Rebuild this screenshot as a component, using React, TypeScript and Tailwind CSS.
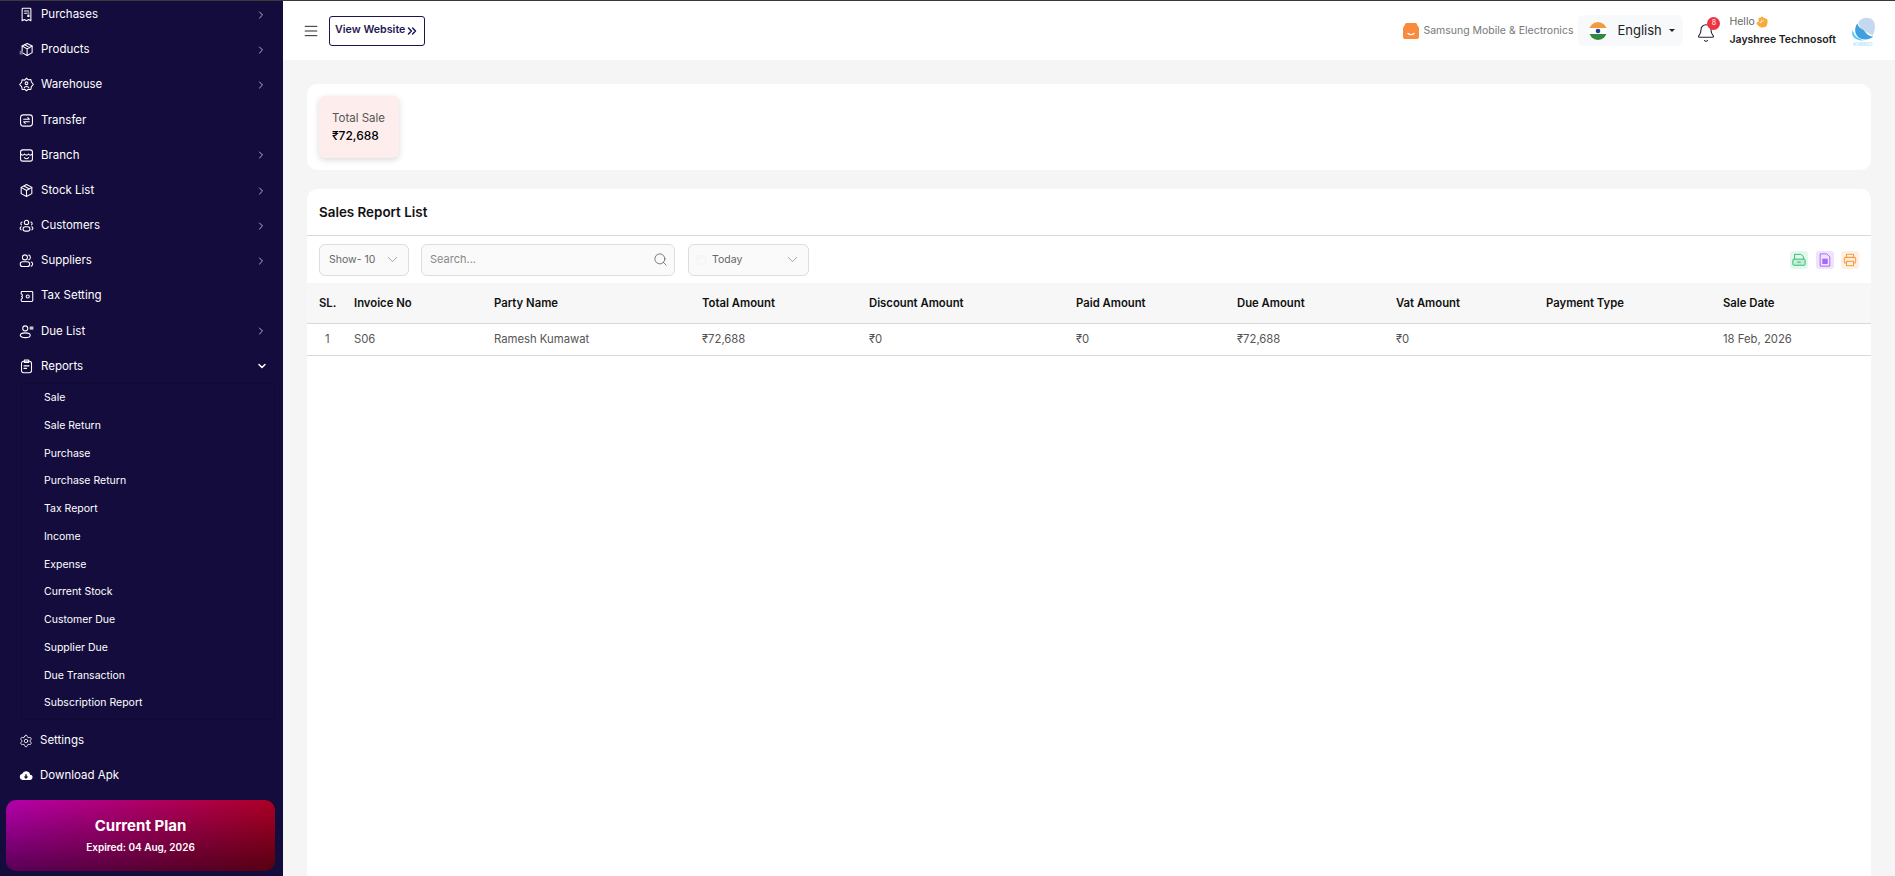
import { ChevronDown, ChevronRight, ChevronsRight, Bell, Menu, Search, Settings, Calendar, Hand } from "lucide-react";
import type { ReactNode } from "react";

const Icon = ({ children }: { children: ReactNode }) => (
  <svg viewBox="0 0 24 24" fill="none" stroke="currentColor" strokeWidth="1.7" strokeLinecap="round" strokeLinejoin="round" className="w-[15px] h-[15px] shrink-0">
    {children}
  </svg>
);

const cube = (
  <>
    <path d="M13 2.5 21 6.5V17l-8 4.5L5 17V6.5z" />
    <path d="M5 6.5 13 11l8-4.5M13 11v10.500M9 4.500l8 4.500" />
  </>
);

const menu: { label: string; icon: ReactNode; arrow?: boolean }[] = [
  {
    label: "Purchases",
    arrow: true,
    icon: (
      <Icon>
        <path d="M5 3.500A1.500 1.500 0 0 1 6.500 2h11A1.500 1.500 0 0 1 19 3.500V22l-3.500-2-3.500 2-3.500-2L5 22z" />
        <path d="M8.500 6.500h7M9 10h3M14 9.500h2M14 13h2v2h-2" />
      </Icon>
    ),
  },
  {
    label: "Products",
    arrow: true,
    icon: (
      <Icon>
        {cube}
        <rect x="1" y="14" width="5" height="6" fill="#77748f" stroke="none" />
      </Icon>
    ),
  },
  {
    label: "Warehouse",
    arrow: true,
    icon: (
      <Icon>
        <path d="M12 2l3 2.500 4-.500.800 4L23 12l-3.200 3.500-.800 4.500-4-.500-3 2.500-3-2.500-4 .500-.800-4.500L1 12l3.200-3.500.800-4 4 .500z" />
        <circle cx="12" cy="10" r="2.200" />
        <path d="M8.500 17c.500-2.500 6.500-2.500 7 0" />
      </Icon>
    ),
  },
  {
    label: "Transfer",
    icon: (
      <Icon>
        <rect x="2.500" y="3" width="19" height="18" rx="4.500" />
        <path d="M7.500 10h9l-2.500-2.500M16.500 14h-9l2.500 2.500" />
      </Icon>
    ),
  },
  {
    label: "Branch",
    arrow: true,
    icon: (
      <Icon>
        <rect x="2.500" y="3" width="19" height="18" rx="3.500" />
        <path d="M2.500 9.500c2 2.500 4.500 2.500 6.300 0 1.800 2.500 4.600 2.500 6.400 0 1.800 2.500 4.300 2.500 6.300 0M8.500 15.500c2 2 5 2 7 0" />
      </Icon>
    ),
  },
  {
    label: "Stock List",
    arrow: true,
    icon: (
      <Icon>
        <path d="M12 2.500 20.500 7v10L12 21.500 3.500 17V7z" />
        <path d="M3.500 7 12 12l8.500-5M12 12v9.500M8 4.700l8.500 4.800" />
      </Icon>
    ),
  },
  {
    label: "Customers",
    arrow: true,
    icon: (
      <Icon>
        <circle cx="12" cy="7" r="3.500" />
        <path d="M5 6.500a2.500 2.500 0 0 0-1 4.500M19 6.500a2.500 2.500 0 0 1 1 4.500" />
        <rect x="6.500" y="14" width="11" height="7" rx="3.500" />
        <path d="M3.500 14C1.500 15 1 18 3.500 19M20.500 14c2 1 2.500 4 0 5" />
      </Icon>
    ),
  },
  {
    label: "Suppliers",
    arrow: true,
    icon: (
      <Icon>
        <circle cx="9.500" cy="7" r="4" />
        <path d="M15.500 3.200a4 4 0 0 1 0 7.600" />
        <rect x="2" y="14" width="15" height="7.500" rx="3.700" />
        <path d="M19.500 14.500c3 .800 3 5.500 0 6.500" />
      </Icon>
    ),
  },
  {
    label: "Tax Setting",
    icon: (
      <Icon>
        <path d="M5 4h15.500A1.500 1.500 0 0 1 22 5.500v13a1.500 1.500 0 0 1-1.500 1.500H5a1.500 1.500 0 0 1-1.500-1.500V16c2.500-.500 2.500-3.500.500-4 2-.500 2-3.500-.500-4V5.500A1.500 1.500 0 0 1 5 4z" />
        <circle cx="14" cy="12" r="2.500" />
      </Icon>
    ),
  },
  {
    label: "Due List",
    arrow: true,
    icon: (
      <Icon>
        <circle cx="10" cy="7" r="4" />
        <ellipse cx="10" cy="18" rx="8" ry="3.800" />
        <rect x="17" y="4" width="6" height="5" fill="#c9c7d6" stroke="none" />
      </Icon>
    ),
  },
];

const reports = ["Sale", "Sale Return", "Purchase", "Purchase Return", "Tax Report", "Income", "Expense", "Current Stock", "Customer Due", "Supplier Due", "Due Transaction", "Subscription Report"];

const columns = [
  { label: "SL.", w: "w-[35px]" },
  { label: "Invoice No", w: "w-[140px]" },
  { label: "Party Name", w: "w-[208px]" },
  { label: "Total Amount", w: "w-[167px]" },
  { label: "Discount Amount", w: "w-[207px]" },
  { label: "Paid Amount", w: "w-[161px]" },
  { label: "Due Amount", w: "w-[159px]" },
  { label: "Vat Amount", w: "w-[150px]" },
  { label: "Payment Type", w: "w-[177px]" },
  { label: "Sale Date", w: "w-[136px]" },
];

const row = ["1", "S06", "Ramesh Kumawat", "₹72,688", "₹0", "₹0", "₹72,688", "₹0", "", "18 Feb, 2026"];

const App = () => {
  return (
    <div className="flex h-screen overflow-hidden bg-[#f5f5f5] border-t border-[#3a3a3a] font-['Inter',sans-serif]">
      <aside className="w-[283px] shrink-0 bg-[#140c3d] text-white flex flex-col overflow-hidden">
        <div className="flex flex-col -mt-[4px]">
          {menu.map((item) => (
            <div key={item.label} className="h-[35.2px] flex items-center pl-[19px] pr-[16px] gap-[7px] text-[11.5px]">
              {item.icon}
              <span className="flex-1">{item.label}</span>
              {item.arrow && <ChevronRight size={12} className="text-[#b8b6c8]" />}
            </div>
          ))}
          <div className="h-[35.2px] flex items-center pl-[19px] pr-[15px] gap-[7px] text-[11.5px]">
            <Icon>
              <rect x="4" y="3.500" width="16" height="18.500" rx="3.500" />
              <path d="M8.500 1.500h7v4h-7zM8 11h8M8 15h4" />
            </Icon>
            <span className="flex-1">Reports</span>
            <ChevronDown size={12} strokeWidth={3} />
          </div>
          <div className="-mt-[1px] ml-[21px] mr-[8px] border border-[#110a33] pl-[22px] pb-[2px]">
            {reports.map((r) => (
              <div key={r} className="h-[27.75px] flex items-center text-[10.5px]">{r}</div>
            ))}
          </div>
          <div className="h-[35px] mt-[3px] flex items-center pl-[19px] gap-[7px] text-[11.5px]">
            <Settings size={14} strokeWidth={1.4} />
            Settings
          </div>
          <div className="h-[35px] flex items-center pl-[19px] gap-[7px] text-[11.5px]">
            <svg viewBox="0 0 24 24" className="w-[14px] h-[14px] fill-white">
              <path d="M19 10a7 7 0 0 0-13.500-1.800A5.500 5.500 0 0 0 6 19h12.500a4.500 4.500 0 0 0 .5-9zm-7 7-4-4h2.800V9h2.400v4H16z" />
            </svg>
            Download Apk
          </div>
        </div>
        <div className="ml-[6px] mr-[8px] mt-[7px] h-[71px] shrink-0 rounded-[10px] bg-[linear-gradient(to_bottom,transparent,rgba(0,0,0,0.5)),linear-gradient(to_right,#b400ac,#ac0024)] flex flex-col items-center justify-center">
          <div className="text-[15px] font-bold leading-[22px]">Current Plan</div>
          <div className="text-[10px] font-semibold leading-[20px]">Expired: 04 Aug, 2026</div>
        </div>
      </aside>

      <main className="flex-1 min-w-0 flex flex-col">
        <header className="h-[59px] shrink-0 bg-white flex items-center pl-[20px] pr-[18px]">
          <Menu size={16} strokeWidth={1.2} className="text-[#000] scale-x-110" />
          <a className="ml-[10px] h-[30px] px-[5px] flex items-center rounded-[3px] border border-[#1c1450] text-[#1f1752] text-[10.7px] font-semibold">
            View Website <ChevronsRight size={14} strokeWidth={2.6} />
          </a>
          <div className="ml-auto flex items-center">
            <svg viewBox="0 0 16 16" className="w-[16px] h-[16px]">
              <path d="M2 1.500A1.500 1.500 0 0 1 3.500 0h9A1.500 1.500 0 0 1 14 1.500L16 5v9a2 2 0 0 1-2 2H2a2 2 0 0 1-2-2V5z" fill="#f98b3e" />
              <path d="M5 10.500c1.500 1.500 4.500 1.500 6 0" stroke="#fff" strokeWidth="1.300" fill="none" strokeLinecap="round" />
            </svg>
            <span className="ml-[4px] text-[10.5px] text-[#777]">Samsung Mobile &amp; Electronics</span>
            <div className="ml-[5px] h-[31px] w-[105px] bg-[#f8f9fb] rounded-[6px] flex items-center pl-[11px]">
              <svg viewBox="0 0 18 18" className="w-[18px] h-[18px]">
                <defs>
                  <clipPath id="flag"><circle cx="9" cy="9" r="9" /></clipPath>
                </defs>
                <g clipPath="url(#flag)">
                  <rect width="18" height="6" fill="#f59a3a" />
                  <rect y="6" width="18" height="6" fill="#fff" />
                  <rect y="12" width="18" height="6" fill="#2e8b3d" />
                  <circle cx="9" cy="9" r="2.300" fill="#2c3e8c" />
                </g>
              </svg>
              <span className="ml-[10px] text-[13px] text-[#222]">English</span>
              <span className="ml-[7px] border-x-[3px] border-x-transparent border-t-[3px] border-t-[#222]" />
            </div>
            <div className="relative ml-[13px] mt-[4px]">
              <Bell size={20} strokeWidth={1.3} className="text-[#1e2230]" />
              <span className="absolute -top-[6px] -right-[4px] w-[13px] h-[13px] rounded-full bg-[#ef3340] text-white text-[7px] flex items-center justify-center">8</span>
            </div>
            <div className="ml-[13px] flex flex-col">
              <span className="text-[10.5px] leading-[18px] text-[#666] flex items-center gap-[1px]">
                Hello <Hand size={12} fill="#f7a93b" stroke="#f7a93b" />
              </span>
              <span className="text-[10.5px] leading-[18px] font-semibold text-[#222]">Jayshree Technosoft</span>
            </div>
            <svg viewBox="0 0 30 34" className="ml-[13px] w-[28px] h-[32px]">
              <path d="M10 8c3-6 12-7 16-2 3 4 2 12-1 16-3-3-7-3-9-7-2 2-3 2-6-7z" fill="#c5d8f0" />
              <path d="M9 9c-4 5-3 13 3 16 5 2 11 1 14-2-4 0-8-3-10-7-3-1-6-3-7-7z" fill="#3f9fe0" />
              <path d="M4 16c-3 6 3 12 12 11-6-1-11-5-12-11z" fill="#5cc8f5" />
              <text x="15" y="33" textAnchor="middle" fontSize="4.500" fill="#8fd6f5">ATABRIDT</text>
            </svg>
          </div>
        </header>

        <div className="flex-1 min-h-0 px-[24px] pt-[24px] flex flex-col gap-[19px]">
          <section className="h-[86px] shrink-0 bg-white rounded-[10px] p-[12px]">
            <div className="w-[80px] h-[62px] rounded-[6px] bg-[#fdeded] shadow-[0_2px_6px_rgba(0,0,0,0.15)] pl-[13px] flex flex-col justify-center">
              <div className="text-[11.5px] leading-[18px] text-[#555]">Total Sale</div>
              <div className="text-[12px] leading-[18px] font-medium text-black">₹72,688</div>
            </div>
          </section>

          <section className="flex-1 bg-white rounded-t-[10px] flex flex-col">
            <div className="h-[47px] shrink-0 border-b border-[#d9d9d9] flex items-center px-[12px] text-[13.4px] font-semibold text-[#111]">
              Sales Report List
            </div>
            <div className="h-[47px] shrink-0 flex items-center pl-[12px] pr-[12px] text-[10.5px] text-[#666]">
              <div className="w-[90px] h-[32px] rounded-[6px] border border-[#ddd] bg-[#fafafa] flex items-center pl-[9px] pr-[7px] justify-between">
                Show- 10 <ChevronDown size={17} strokeWidth={0.8} />
              </div>
              <div className="ml-[12px] w-[254px] h-[32px] rounded-[6px] border border-[#ddd] bg-[#fafafa] flex items-center pl-[8px] pr-[6px] justify-between text-[11px] text-[#888]">
                Search... <Search size={15} strokeWidth={1.1} className="text-[#444]" />
              </div>
              <div className="ml-[13px] w-[121px] h-[32px] rounded-[6px] border border-[#ddd] bg-[#fafafa] flex items-center pl-[7px] pr-[7px]">
                <Calendar size={11} className="text-[#f2f2f2]" />
                <span className="ml-[5px] flex-1">Today</span>
                <ChevronDown size={17} strokeWidth={0.8} />
              </div>
              <div className="ml-auto flex gap-[7.500px]">
                <span className="w-[18px] h-[18px] rounded-[3px] bg-[#e3f8ec] flex items-center justify-center">
                  <svg viewBox="0 0 16 16" fill="none" stroke="#34b870" strokeWidth="1.100" className="w-[14px] h-[14px]">
                    <path d="M3 7V1.500h7L13 4v3" />
                    <rect x="1" y="7" width="14" height="7" rx="1" fill="#bff0d3" />
                    <path d="M6 10.500h4" />
                  </svg>
                </span>
                <span className="w-[18px] h-[18px] rounded-[3px] bg-[#efe4fd] flex items-center justify-center">
                  <svg viewBox="0 0 16 16" fill="none" stroke="#a668f5" strokeWidth="1.100" className="w-[14px] h-[14px]">
                    <path d="M2.500 1h7.500l3.500 3.500V15h-11z" />
                    <rect x="5.500" y="7" width="5" height="5" fill="#a668f5" />
                  </svg>
                </span>
                <span className="w-[18px] h-[18px] rounded-[3px] bg-[#fef0e2] flex items-center justify-center">
                  <svg viewBox="0 0 16 16" fill="none" stroke="#fb9a3c" strokeWidth="1.200" className="w-[14px] h-[14px]">
                    <path d="M4 5V1.500h8V5" />
                    <rect x="1.500" y="5" width="13" height="6.500" rx="1.500" />
                    <rect x="4" y="9.500" width="8" height="5" fill="#fef0e2" />
                  </svg>
                </span>
              </div>
            </div>
            <div className="h-[41px] shrink-0 bg-[#f7f7f7] border-b border-[#d9d9d9] flex items-center pl-[12px] text-[11.3px] font-semibold text-[#111]">
              {columns.map((c) => (
                <div key={c.label} className={c.w}>{c.label}</div>
              ))}
            </div>
            <div className="h-[32px] shrink-0 border-b border-[#d9d9d9] flex items-center pl-[12px] text-[11.3px] text-[#555]">
              {columns.map((c, i) => (
                <div key={c.label} className={i === 0 ? `${c.w} pl-[6px]` : c.w}>{row[i]}</div>
              ))}
            </div>
          </section>
        </div>
      </main>
    </div>
  );
};

export default App;
